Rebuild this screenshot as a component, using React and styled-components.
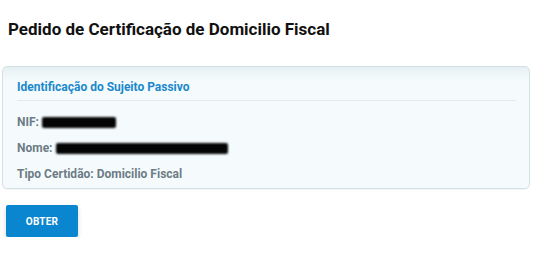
import React from 'react';
import styled, { createGlobalStyle } from 'styled-components';

const GlobalStyle = createGlobalStyle`
  html, body {
    margin: 0;
    padding: 0;
    background: #ffffff;
    font-family: Roboto, "Liberation Sans", Arial, sans-serif;
  }
`;

const Page = styled.div`
  padding: 19px 23px 0 2px;
`;

const PageTitle = styled.h1`
  margin: 0 0 27px 6px;
  font-size: 17px;
  line-height: 20px;
  font-weight: 700;
  color: #111111;
`;

const Panel = styled.div`
  border: 1px solid #d3e1e6;
  border-radius: 5px;
  background: linear-gradient(to bottom, #e6f0f3 0px, #f5fbfc 14px, #f5fbfc 100%);
  box-shadow: 0 1px 1px rgba(0, 0, 0, 0.04);
  padding: 13px 13px 6px 14px;
`;

const PanelTitle = styled.h2`
  margin: 0;
  padding-bottom: 5px;
  border-bottom: 1px solid #e1e9ec;
  font-size: 12px;
  line-height: 15px;
  font-weight: 700;
  color: #1a88cc;
`;

const FieldList = styled.div`
  display: flex;
  flex-direction: column;
  padding-top: 14px;
  gap: 11px;
`;

const Field = styled.div`
  display: flex;
  align-items: center;
  gap: 3px;
  font-size: 12px;
  line-height: 15px;
  font-weight: 700;
  color: #6d7b86;
`;

const Redacted = styled.span`
  display: inline-block;
  width: ${p => p.$width}px;
  height: 11px;
  background: #050505;
  border-radius: 2px;
  filter: blur(0.8px);
`;

const Actions = styled.div`
  padding: 16px 0 0 4px;
`;

const PrimaryButton = styled.button`
  width: 72px;
  height: 32px;
  border: none;
  border-radius: 2px;
  background: #0a86d1;
  color: #ffffff;
  font-family: inherit;
  font-size: 10px;
  font-weight: 700;
  letter-spacing: 0.2px;
  box-shadow: 0 2px 5px rgba(0, 0, 0, 0.16);
  cursor: pointer;
`;

export default function App() {
  return (
    <>
      <GlobalStyle />
      <Page>
        <PageTitle>Pedido de Certificação de Domicilio Fiscal</PageTitle>
        <Panel>
          <PanelTitle>Identificação do Sujeito Passivo</PanelTitle>
          <FieldList>
            <Field>NIF: <Redacted $width={74} /></Field>
            <Field>Nome: <Redacted $width={172} /></Field>
            <Field>Tipo Certidão: Domicilio Fiscal</Field>
          </FieldList>
        </Panel>
        <Actions>
          <PrimaryButton>OBTER</PrimaryButton>
        </Actions>
      </Page>
    </>
  );
}
